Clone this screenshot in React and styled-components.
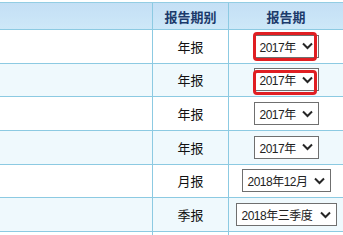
import styled, { createGlobalStyle } from "styled-components";

const GlobalStyle = createGlobalStyle`
  html, body {
    margin: 0;
    padding: 0;
    background: #fff;
  }
  body {
    font-family: "Liberation Sans", "Noto Sans CJK SC", sans-serif;
  }
`;

const Page = styled.div`
  width: 343px;
  height: 235px;
  overflow: hidden;
  padding-top: 2px;
  box-sizing: border-box;
`;

const Table = styled.div`
  display: flex;
  flex-direction: column;
`;

const HeadRow = styled.div`
  display: grid;
  grid-template-columns: 152px 76px 1fr;
  height: 26px;
  border-top: 1px solid #93cde3;
  border-bottom: 1px solid #8ccae2;
  background: linear-gradient(#c4dff5, #cde8f8);
`;

const Row = styled.div`
  display: grid;
  grid-template-columns: 152px 76px 1fr;
  height: 32.67px;
  border-bottom: 1px solid #8ccae2;
  background: ${({ $alt }) => ($alt ? "#eff9fd" : "#ffffff")};
  flex-shrink: 0;
`;

const HeadCell = styled.div`
  display: flex;
  align-items: center;
  justify-content: center;
  border-left: ${({ $first }) => ($first ? "none" : "1px solid #8ccae2")};
  font-family: "Noto Sans CJK SC", sans-serif;
  font-weight: 700;
  font-size: 13px;
  color: #1b3a6b;
`;

const Cell = styled.div`
  display: flex;
  align-items: center;
  justify-content: center;
  border-left: ${({ $first }) => ($first ? "none" : "1px solid #8ccae2")};
  font-family: "Noto Sans CJK SC", sans-serif;
  font-size: 13px;
  color: #111;
`;

const SelectBox = styled.div`
  position: relative;
  box-sizing: border-box;
  width: ${({ $w }) => $w}px;
  height: 23px;
  border: 1px solid #6f6f6f;
  background: #fff;
  display: flex;
  align-items: center;
  justify-content: space-between;
  padding: 0 5px 0 5px;
  font-family: "Liberation Sans", "Noto Sans CJK SC", sans-serif;
  font-size: 12px;
  color: #222;
`;

const Value = styled.span`
  letter-spacing: -0.5px;
  white-space: nowrap;
`;

const Mark = styled.div`
  position: absolute;
  left: -2px;
  right: 1px;
  top: ${({ $top }) => $top}px;
  bottom: ${({ $bottom }) => $bottom}px;
  border: 3px solid #e01e22;
  border-radius: 4px;
  pointer-events: none;
`;

const Chevron = () => (
  <svg width="11" height="8" viewBox="0 0 11 8">
    <polyline
      points="1,1.5 5.5,6 10,1.5"
      fill="none"
      stroke="#262626"
      strokeWidth="2"
    />
  </svg>
);

const rows = [
  { type: "年报", value: "2017年", w: 65, mark: { top: -4, bottom: -4 } },
  { type: "年报", value: "2017年", w: 65, mark: { top: 1, bottom: -5 } },
  { type: "年报", value: "2017年", w: 65 },
  { type: "年报", value: "2017年", w: 65 },
  { type: "月报", value: "2018年12月", w: 89 },
  { type: "季报", value: "2018年三季度", w: 101 },
  { type: "", value: "", w: 0 },
];

const App = () => {
  return (
    <Page>
      <GlobalStyle />
      <Table>
        <HeadRow>
          <HeadCell $first />
          <HeadCell>报告期别</HeadCell>
          <HeadCell>报告期</HeadCell>
        </HeadRow>
        {rows.map((r, i) => (
          <Row key={i} $alt={i % 2 === 1}>
            <Cell $first />
            <Cell>{r.type}</Cell>
            <Cell>
              {r.value && (
                <SelectBox $w={r.w}>
                  <Value>{r.value}</Value>
                  <Chevron />
                  {r.mark && <Mark $top={r.mark.top} $bottom={r.mark.bottom} />}
                </SelectBox>
              )}
            </Cell>
          </Row>
        ))}
      </Table>
    </Page>
  );
};

export default App;
